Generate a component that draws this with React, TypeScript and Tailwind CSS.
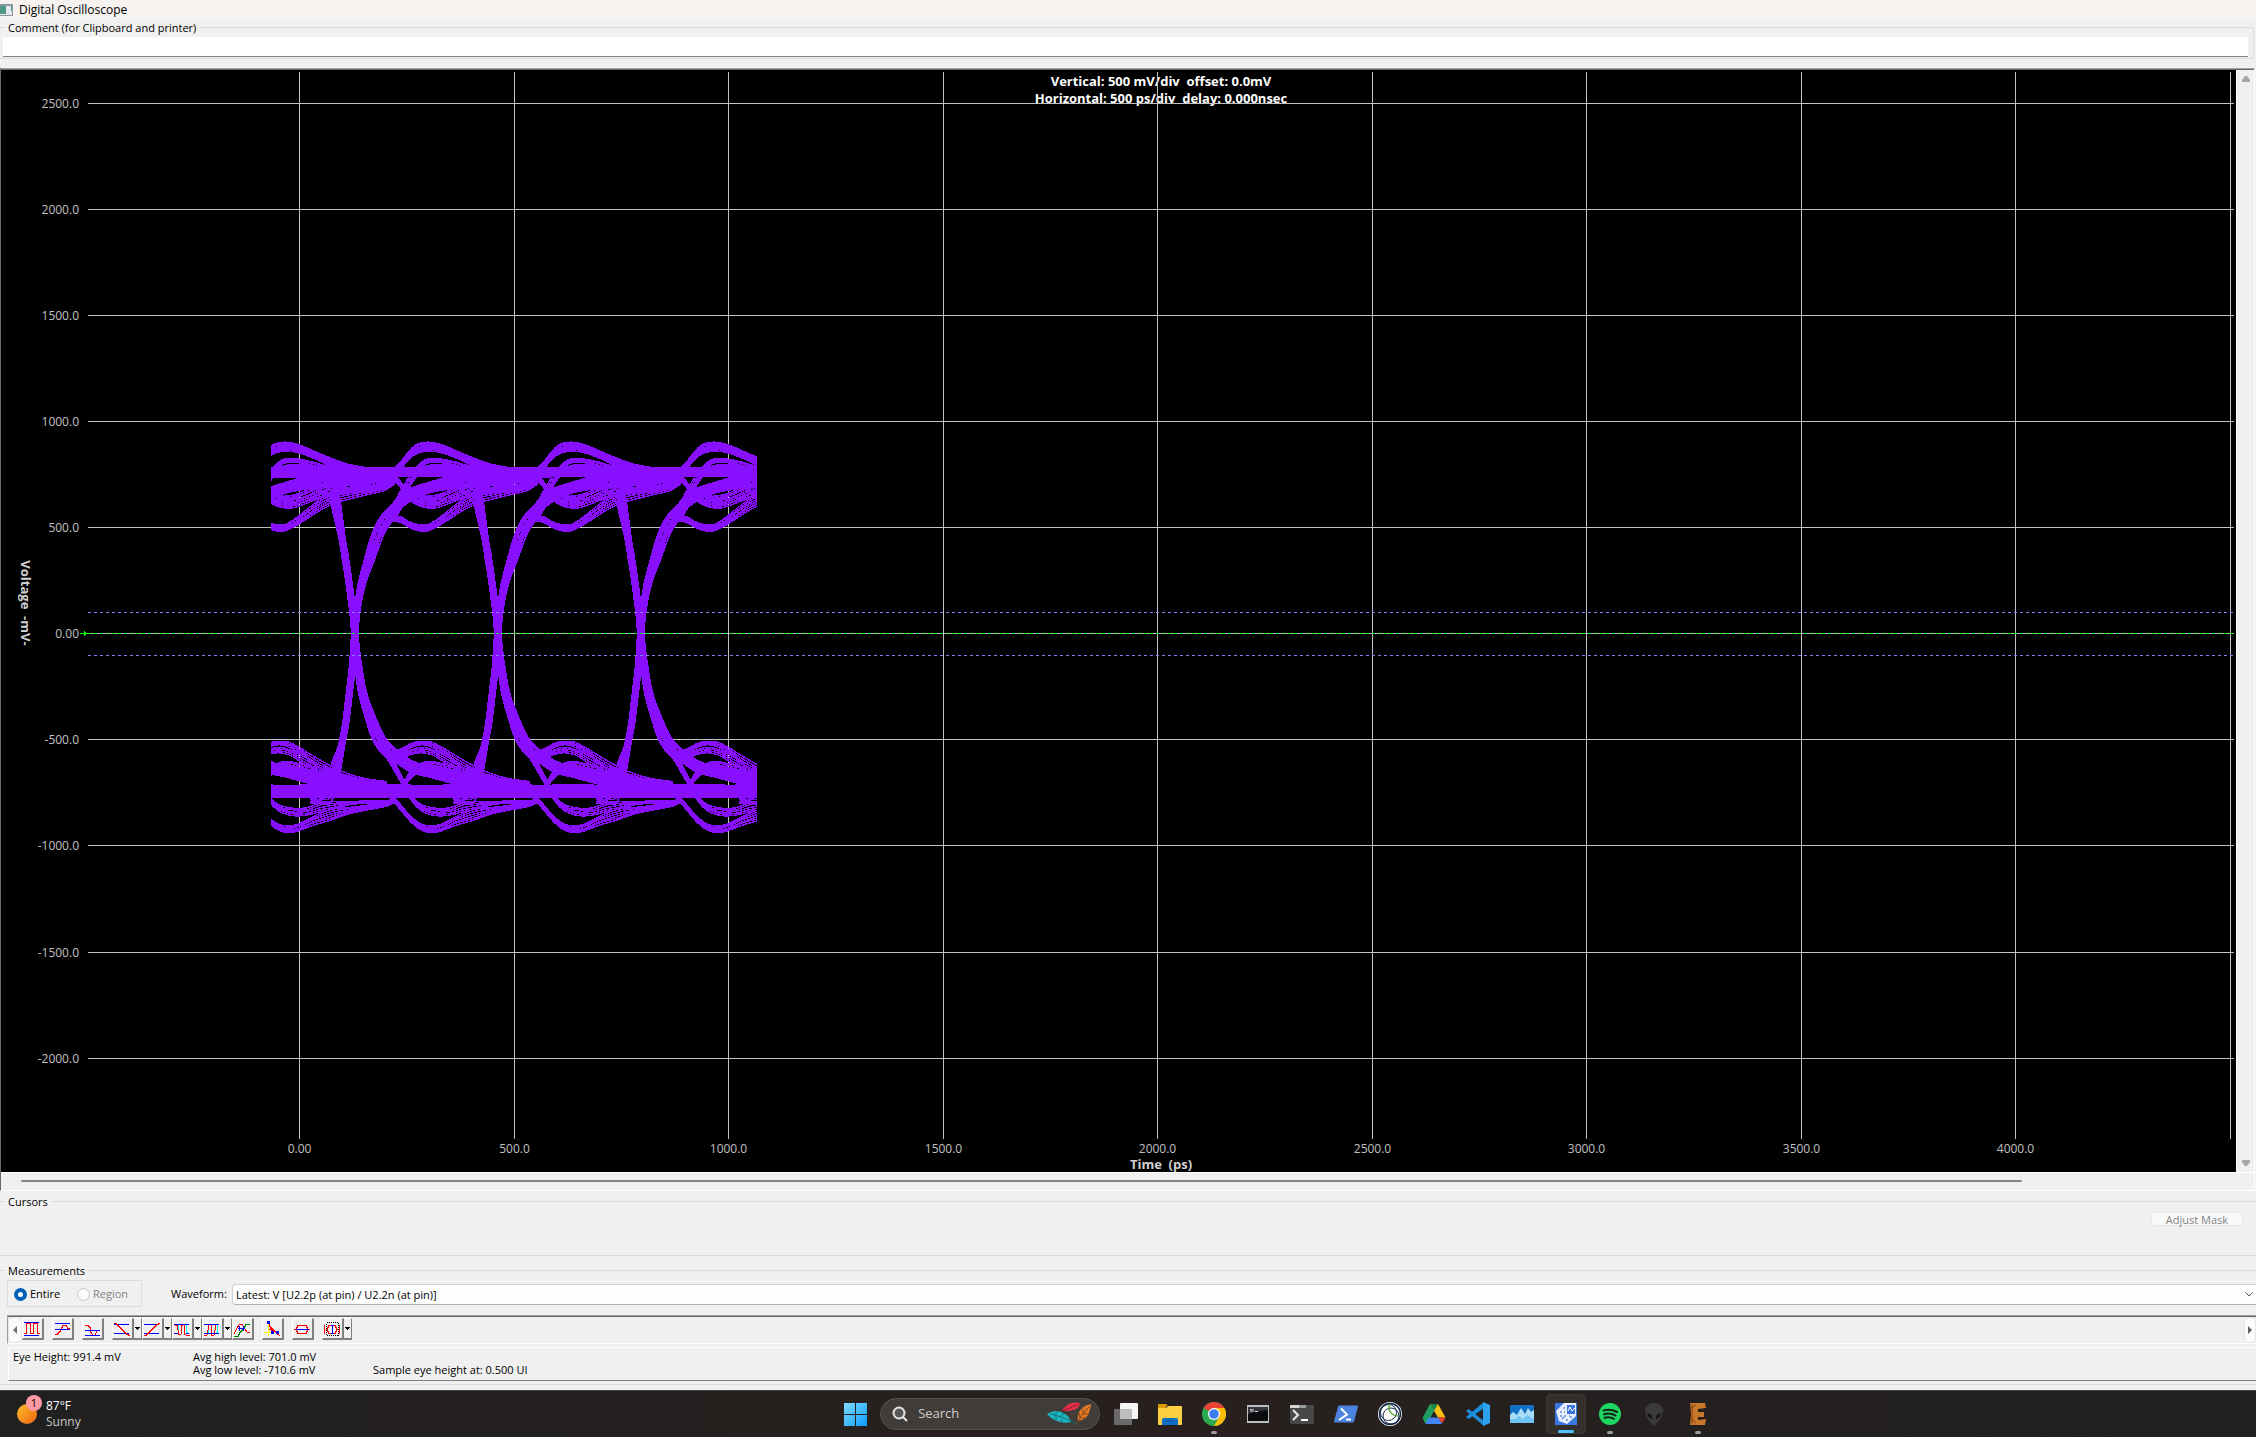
import { useState } from "react";
import type { ReactNode } from "react";

// x, y, spread in x, spread in y
type Pt = [number, number, number, number];
type Bundle = { count: number; pts: Pt[] };

const PLOT_W = 2235;
const PLOT_H = 1102;
const PERIOD = 429;

const timeTicks = [0, 500, 1000, 1500, 2000, 2500, 3000, 3500, 4000, 4500];
const voltTicks = [2500, 2000, 1500, 1000, 500, 0, -500, -1000, -1500, -2000];

const timeX = (ps: number) => Math.round(298 + ps * 0.42909) + 0.5;
const voltY = (mv: number) => Math.round(563.2 - mv * 0.2122) + 0.5;

// One unit interval of the eye, every trace family as a bundle of strands.
// Units are thirds of a plot pixel.
const bundles: Bundle[] = [
  // overshoot after a rising edge
  { count: 8, pts: [[180, 128, 0, 10], [195, 122, 0, 16], [213, 106, 0, 22], [235, 78, 0, 24], [262, 56, 0, 28], [300, 50, 0, 26], [340, 58, 0, 24], [380, 74, 0, 22], [435, 98, 0, 24], [480, 112, 0, 20], [540, 120, 0, 14], [620, 126, 0, 10]] },
  { count: 4, pts: [[208, 195, 12, 0], [224, 176, 12, 0], [240, 150, 14, 8], [262, 118, 6, 14], [290, 94, 0, 12], [330, 92, 0, 10], [380, 104, 0, 14], [430, 118, 0, 14], [500, 125, 0, 10], [600, 128, 0, 8]] },
  { count: 3, pts: [[222, 190, 8, 0], [240, 162, 8, 0], [262, 130, 6, 6], [290, 112, 0, 8], [330, 108, 0, 8], [380, 114, 0, 6], [440, 122, 0, 8]] },
  // falling edge, top to bottom
  { count: 15, pts: [[-60, 140, 0, -50], [-29, 155, 0, -70], [1, 168, 0, -100], [16, 210, 16, -70], [27, 270, 20, -20], [37, 330, 19, 0], [47, 390, 19, 0], [60, 480, 18, 0], [70, 560, 18, 0], [74, 610, 18, 0], [84, 700, 20, 0], [98, 790, 24, 0], [124, 870, 32, 0], [149, 930, 38, -6], [178, 966, 34, -20], [208, 984, 10, -34], [245, 1010, 0, -36], [300, 1026, 0, -32], [360, 1040, 0, -36], [430, 1058, 0, -40], [500, 1074, 0, -32], [620, 1084, 0, -24]] },
  // rising edge, bottom to top
  { count: 15, pts: [[-60, 1095, 0, 50], [-29, 1084, 0, 70], [1, 1066, 0, 110], [15, 1028, 16, 70], [27, 980, 20, 20], [36, 940, 18, 0], [47, 880, 18, 0], [58, 790, 18, 0], [68, 700, 18, 0], [74, 610, 18, 0], [83, 530, 18, 0], [96, 460, 22, 0], [118, 390, 30, 0], [140, 322, 32, 10], [164, 274, 26, 24], [192, 242, 14, 36], [218, 208, 0, 46], [250, 190, 0, 36], [300, 172, 0, 32], [360, 158, 0, 38], [430, 148, 0, 44], [500, 146, 0, 40], [560, 142, 0, 34], [620, 135, 0, 24]] },
  // ring down under the high level
  { count: 6, pts: [[176, 266, 0, 16], [196, 266, 0, 16], [215, 270, 0, 18], [235, 282, 0, 16], [260, 292, 0, 18], [290, 294, 0, 18], [320, 280, 0, 22], [360, 252, 0, 28], [400, 224, 0, 34], [440, 202, 0, 38], [480, 192, 0, 34], [540, 182, 0, 24], [590, 172, 0, 20], [625, 150, 0, 20]] },
  { count: 9, pts: [[180, 138, 0, 16], [198, 148, 0, 16], [215, 168, 0, 18], [235, 195, 0, 22], [262, 210, 0, 30], [290, 216, 0, 34], [320, 214, 0, 38], [360, 200, 0, 38], [400, 184, 0, 40], [440, 172, 0, 44], [500, 164, 0, 40], [560, 156, 0, 30], [605, 144, 0, 22]] },
  // overshoot after a falling edge
  { count: 6, pts: [[180, 1100, 0, 20], [195, 1112, 0, 16], [215, 1136, 0, 16], [245, 1170, 0, 16], [275, 1192, 0, 18], [305, 1198, 0, 20], [335, 1192, 0, 20], [380, 1172, 0, 26], [430, 1155, 0, 32], [480, 1143, 0, 20], [540, 1133, 0, 14], [600, 1121, 0, 14], [625, 1108, 0, 14]] },
  { count: 5, pts: [[236, 1092, 0, 14], [248, 1108, 0, 16], [262, 1124, 0, 16], [285, 1138, 0, 20], [320, 1146, 0, 22], [360, 1144, 0, 22], [400, 1132, 0, 26], [440, 1126, 0, 22], [500, 1118, 0, 8], [600, 1116, 0, 6]] },
  // ring up over the low level
  { count: 4, pts: [[176, 970, 0, 12], [190, 968, 0, 12], [215, 962, 0, 12], [245, 946, 0, 12], [275, 939, 0, 10], [305, 944, 0, 14], [340, 962, 0, 16], [380, 990, 0, 22], [430, 1018, 0, 22], [470, 1036, 0, 20], [530, 1052, 0, 14], [600, 1060, 0, 10]] },
  { count: 4, pts: [[190, 978, 0, 14], [215, 976, 0, 14], [245, 966, 0, 14], [275, 960, 0, 16], [310, 968, 0, 16], [350, 990, 0, 22], [390, 1012, 0, 22], [440, 1034, 0, 20], [500, 1050, 0, 14], [600, 1064, 0, 10]] },
  { count: 5, pts: [[168, 970, 16, 0], [186, 996, 16, 0], [204, 1030, 14, 0], [220, 1060, 10, 0], [232, 1076, 8, 0]] },
  { count: 5, pts: [[218, 1068, 10, 0], [232, 1050, 14, 0], [250, 1026, 10, 12], [275, 1008, 0, 18], [305, 1004, 0, 18], [340, 1012, 0, 20], [400, 1026, 0, 24], [440, 1040, 0, 24], [500, 1056, 0, 18], [600, 1068, 0, 12]] },
  { count: 7, pts: [[230, 1010, 0, 20], [265, 1022, 0, 22], [300, 1028, 0, 24], [360, 1042, 0, 24], [430, 1058, 0, 26], [500, 1072, 0, 22], [600, 1080, 0, 16]] },
];

// settled high and low levels run straight through
const levels = [114, 117, 120, 123, 126, 129, 131, 134, 137, 140, 1066, 1069, 1072, 1075, 1078, 1081, 1084, 1087, 1090, 1093, 1096, 1099, 1102];

const px = (x: number) => 329 + x / 3;
const py = (y: number) => 360 + y / 3;

// repeatable noise in -0.5..0.5
function noise(a: number, b: number) {
  const n = Math.sin(a * 127.1 + b * 311.7) * 43758.5453;
  return n - Math.floor(n) - 0.5;
}

function smoothPath(points: number[][]) {
  let d = `M${points[0][0].toFixed(1)} ${points[0][1].toFixed(1)}`;
  for (let i = 0; i < points.length - 1; i++) {
    const p0 = points[Math.max(i - 1, 0)];
    const p1 = points[i];
    const p2 = points[i + 1];
    const p3 = points[Math.min(i + 2, points.length - 1)];
    const c = [
      p1[0] + (p2[0] - p0[0]) / 6,
      p1[1] + (p2[1] - p0[1]) / 6,
      p2[0] - (p3[0] - p1[0]) / 6,
      p2[1] - (p3[1] - p1[1]) / 6,
      p2[0],
      p2[1],
    ];
    d += `C${c.map((n) => n.toFixed(1)).join(" ")}`;
  }
  return d;
}

function eyePaths() {
  const paths: string[] = [];
  for (let k = -2; k <= 3; k++) {
    bundles.forEach((b, bi) => {
      for (let s = 0; s < b.count; s++) {
        const base = s / (b.count - 1) - 0.5;
        const edge = s === 0 || s === b.count - 1;
        const pts = b.pts.map(([x, y, dx, dy], i) => {
          const f = edge ? base : base + noise(bi * 31 + s, i) * 0.1;
          return [px(x + dx * f + k * PERIOD), py(y + dy * f)];
        });
        paths.push(smoothPath(pts));
      }
    });
  }
  levels.forEach((y, li) => {
    const pts: number[][] = [];
    for (let i = 0; i <= 24; i++) {
      pts.push([px(-200 + i * 70), py(y + noise(li, i) * 2)]);
    }
    paths.push(smoothPath(pts));
  });
  return paths;
}

const traces = eyePaths();

const formatTick = (v: number) => (v === 0 ? "0.00" : v.toFixed(1));

function ScopePlot() {
  return (
    <svg viewBox={`0 0 ${PLOT_W} ${PLOT_H}`} className="block h-auto w-full bg-black" role="img" aria-label="Eye diagram">
      <defs>
        <clipPath id="eye">
          <rect x="270" y="350" width="486" height="450" />
        </clipPath>
      </defs>
      <g fill="#ffffff" className="text-[13px] font-bold" textAnchor="middle">
        <text x="1160" y="16" xmlSpace="preserve">Vertical: 500 mV/div  offset: 0.0mV</text>
        <text x="1160" y="33" xmlSpace="preserve">Horizontal: 500 ps/div  delay: 0.000nsec</text>
      </g>
      <g stroke="#c0c0c0" shapeRendering="crispEdges">
        {timeTicks.map((t) => (
          <line key={t} x1={timeX(t)} x2={timeX(t)} y1="2" y2="1069" />
        ))}
        {voltTicks.map((v) => (
          <line key={v} x1="87" x2="2233" y1={voltY(v)} y2={voltY(v)} />
        ))}
      </g>
      <g stroke="#8810ff" strokeWidth="1.5" fill="none" clipPath="url(#eye)" shapeRendering="crispEdges">
        {traces.map((d, i) => (
          <path key={i} d={d} />
        ))}
      </g>
      <g shapeRendering="crispEdges" strokeDasharray="3 3">
        <line x1="87" x2="2233" y1="542.5" y2="542.5" stroke="#8080ff" />
        <line x1="87" x2="2233" y1="585.5" y2="585.5" stroke="#8080ff" />
        <line x1="87" x2="2233" y1="563.5" y2="563.5" stroke="#00ff00" />
      </g>
      <path d="M79 563h4v-2h1v1h1v1h2v1h-2v1h-1v1h-1v-2h-4z" fill="#00ff00" shapeRendering="crispEdges" />
      <g fill="#c0c0c0" className="text-[12px]">
        {voltTicks.map((v) => (
          <text key={v} x="78" y={voltY(v) + 4} textAnchor="end">{formatTick(v)}</text>
        ))}
        {timeTicks.slice(0, -1).map((t) => (
          <text key={t} x={timeX(t)} y="1083" textAnchor="middle">{formatTick(t)}</text>
        ))}
      </g>
      <g fill="#d0d0d0" className="text-[13px] font-bold" textAnchor="middle">
        <text x="1160" y="1099" xmlSpace="preserve">Time  (ps)</text>
        <text transform="translate(20 533) rotate(90)" xmlSpace="preserve">Voltage  -mV-</text>
      </g>
    </svg>
  );
}

function ToolIcon({ children }: { children: ReactNode }) {
  return (
    <svg viewBox="0 0 18 18" className="block h-[18px] w-[18px]" fill="none" stroke="#ff0000" shapeRendering="crispEdges">
      {children}
    </svg>
  );
}

type Tool = { name: string; menu?: boolean; gap?: boolean; icon: ReactNode };

const tools: Tool[] = [
  { name: "Peak to peak", gap: true, icon: <><path d="M1 2.500h15M1 15.500h15" stroke="#0000ff" /><path d="M1 13.500h2.500v-10h4v10h3v-10h4v10h2" /></> },
  { name: "High level", gap: true, icon: <><path d="M2 14.500h2l3-3 3-6h3l2 3h2" /><path d="M2 3.500h15M2 9.500h15" stroke="#0000ff" /></> },
  { name: "Low level", gap: true, icon: <><path d="M2 5.500h3l2 2 1 5 2 3h2l2-5h3" /><path d="M2 10.500h15M2 15.500h15" stroke="#0000ff" /></> },
  { name: "Fall time", menu: true, icon: <><path d="M1 4.500h15M1 13.500h15" stroke="#0000ff" /><path d="M1 3.500h2l11 11 3 1" /></> },
  { name: "Rise time", menu: true, icon: <><path d="M1 4.500h15M1 13.500h15" stroke="#0000ff" /><path d="M1 15.500h2l11-11 3-1" /></> },
  { name: "Positive width", menu: true, icon: <><path d="M5.500 4v9M13.500 5v7l2 2" stroke="#00ffff" /><path d="M1 4.500l3 1 2 9h2l1-9 2-1 1 10 2 1h3" /><path d="M1 4.500h15M1 13.500h4M13 13.500h3" stroke="#0000ff" /></> },
  { name: "Negative width", menu: true, icon: <><path d="M5.500 5v8M14.500 5v7l-2 2" stroke="#00ffff" /><path d="M1 15.500h3l2-11h2l1 11h2l2-11h3" /><path d="M1 4.500h15M1 13.500h15" stroke="#0000ff" /></> },
  { name: "Delay", gap: true, icon: <><path d="M1 16.500h4l2-4 4-4 2-4h4" stroke="#008000" /><path d="M1 14l3-6 3-4h2l2 4 3 4h3" /><path d="M5 8.500h7M6.500 6v5M10.500 6v5" stroke="#0000ff" /></> },
  { name: "Track", gap: true, icon: <><path d="M5.500 4v12M1 12.500h10" stroke="#ffff00" /><path d="M6 4l3 9M6 5l8 8M7 8l10 8M6 10l4-2" /><path d="M4 1h3v3h-3zM8 11h3v3h-3zM13 11h3v3h-3z" fill="#0000ff" stroke="none" /></> },
  { name: "Eye width", gap: true, icon: <><path d="M1 9.500h2l2-4h8l2 4h2M3 9.500l2 4h8l2-4" /><path d="M3 9.500h13" stroke="#0000ff" /></> },
  { name: "Eye height", menu: true, icon: <><path d="M3.500 2.500h12v13h-12z" stroke="#000000" strokeDasharray="1 1" /><path d="M2 5l-1 4 1 5M4 9.500l2-4h6l2 4-2 4h-6zM16 5l1 4-1 5" /><path d="M9.500 6v7M8 5.500h3M8 13.500h3" stroke="#0000ff" /></> },
];

function ToolButton({ tool }: { tool: Tool }) {
  return (
    <div className={tool.gap ? "mr-2 flex" : "flex"}>
      <button
        aria-label={tool.name}
        className="h-[22px] w-[22px] border border-r-2 border-b-2 border-white border-r-[#808080] border-b-[#808080] bg-[#f0f0f0]"
      >
        <ToolIcon>{tool.icon}</ToolIcon>
      </button>
      {tool.menu && (
        <button
          aria-label={`${tool.name} options`}
          className="flex h-[22px] w-2 items-center justify-center border-t border-r border-b-2 border-white border-r-[#808080] border-b-[#808080] bg-[#f0f0f0]"
        >
          <svg viewBox="0 0 5 3" className="h-[3px] w-[5px]" shapeRendering="crispEdges">
            <path d="M0 0h5v1h-1v1h-1v1h-1v-1h-1v-1h-1z" />
          </svg>
        </button>
      )}
    </div>
  );
}

function Toolbar() {
  return (
    <div className="ml-[7px] flex h-[29px] border-t border-b border-l border-t-[#a0a0a0] border-b-white border-l-[#a0a0a0]">
      <div className="flex w-full border-t border-[#696969]">
        <button aria-label="Scroll left" className="flex w-[14px] items-center justify-center rounded-sm border border-[#e5e5e5] bg-[#fbfbfb]">
          <svg viewBox="0 0 4 8" className="h-2 w-1"><path d="M4 0v8l-4-4z" fill="#707070" /></svg>
        </button>
        <div className="flex flex-1 pt-px">
          {tools.map((tool) => <ToolButton key={tool.name} tool={tool} />)}
        </div>
        <button aria-label="Scroll right" className="flex w-3 items-center justify-center rounded-sm border border-[#e5e5e5] bg-[#fbfbfb]">
          <svg viewBox="0 0 4 8" className="h-2 w-1"><path d="M0 0v8l4-4z" fill="#606060" /></svg>
        </button>
      </div>
    </div>
  );
}

function Group({ title, className, children }: { title: string; className: string; children?: ReactNode }) {
  return (
    <fieldset className={`border-t border-b border-[#dcdcdc] ${className}`}>
      <legend className="ml-[5px] h-[14px] px-[3px] leading-4">{title}</legend>
      {children}
    </fieldset>
  );
}

function Measurements() {
  const [range, setRange] = useState("entire");
  return (
    <Group title="Measurements" className="mt-[7px] h-[122px]">
      <div className="flex h-[38px] items-start pt-[3px]">
        <div className="ml-[7px] flex h-[27px] w-[135px] items-center border border-[#dcdcdc] pt-px pl-[6px]">
          <label className="flex w-[63px] items-center gap-[3px]">
            <input
              type="radio"
              name="range"
              checked={range === "entire"}
              onChange={() => setRange("entire")}
              className="h-[13px] w-[13px] appearance-none rounded-full border border-[#8a8a8a] bg-white checked:border-4 checked:border-[#005fb8]"
            />
            Entire
          </label>
          <label className="flex items-center gap-[3px] text-[#838383]">
            <input type="radio" name="range" disabled className="h-[13px] w-[13px] appearance-none rounded-full border border-[#c5c5c5] bg-[#fbfbfb]" />
            Region
          </label>
        </div>
        <label htmlFor="waveform" className="mt-1 ml-[29px] w-[61px] leading-5">Waveform:</label>
        <div className="relative mt-1 flex-1">
          <select id="waveform" className="block h-[21px] w-full appearance-none rounded-l-sm border border-r-0 border-[#cfcfcf] border-b-[#b0b0b0] bg-[#fdfdfd] pt-[2px] pl-[3px]">
            <option>Latest: V [U2.2p (at pin) / U2.2n (at pin)]</option>
          </select>
          <svg viewBox="0 0 8 5" className="pointer-events-none absolute top-2 right-[3px] h-[5px] w-2" fill="none" stroke="#505050">
            <path d="M0.500 0.500l3.500 3.500 3.500-3.500" />
          </svg>
        </div>
      </div>
      <Toolbar />
      <div className="mt-[3px] ml-2 flex h-[34px] border-t border-b border-l border-t-[#fbfbfb] border-b-[#808080] border-l-white pt-[2px] leading-[13px]">
        <p className="w-[180px] pl-1">Eye Height: 991.4 mV</p>
        <p className="w-[180px] pl-1">Avg high level: 701.0 mV<br />Avg low level: -710.6 mV</p>
        <p className="pt-[13px] pl-1">Sample eye height at: 0.500 UI</p>
      </div>
    </Group>
  );
}

type TaskApp = { name: string; running?: boolean; active?: boolean; icon: ReactNode };

const apps: TaskApp[] = [
  { name: "Task view", icon: <><rect x="6" y="1" width="18" height="16" rx="1" fill="#f5f5f5" /><rect x="0" y="7" width="18" height="16" rx="1" fill="#6a6a6a" /><path d="M6 7h12v10h-12z" fill="#bdbdbd" /></> },
  { name: "File Explorer", icon: <><path d="M0 3q0-1 1-1h7l2 2h-2v4h-8z" fill="#d99b00" /><path d="M0 6h8l2-2h13q1 0 1 1v17q0 1-1 1h-22q-1 0-1-1z" fill="#ffcf43" /><path d="M4 23v-5q0-2 2-2h12q2 0 2 2v5z" fill="#0f6fc5" /><path d="M8 19h8" stroke="#0a4f92" strokeWidth="1" /></> },
  { name: "Chrome", running: true, icon: <><circle cx="12" cy="12" r="12" fill="#2da94f" /><path d="M12 12L1.600 6A12 12 0 0 1 22.400 6z" fill="#ea4335" /><path d="M12 6h10.400A12 12 0 0 1 12 24l5.200-9z" fill="#fbbc04" /><circle cx="12" cy="12" r="6" fill="#ffffff" /><circle cx="12" cy="12" r="4.800" fill="#3b7ded" /></> },
  { name: "Command Prompt", icon: <><rect x="1" y="3" width="22" height="18" fill="#b9bec2" /><rect x="2" y="5" width="20" height="14" fill="#0b0b0d" /><path d="M2 12q10-3 20-4v-3h-20z" fill="#33363a" /><path d="M4 7.500h2M4 9h2M7 7v3M9 9.500h3" stroke="#d0d0d0" strokeWidth="1" /></> },
  { name: "Terminal", icon: <><rect x="0" y="3" width="24" height="19" rx="1" fill="#484848" /><path d="M0 6v-2q0-1 1-1h8v3z" fill="#d5d5d5" /><path d="M9 3h7v3h-7z" fill="#9b9b9b" /><path d="M3 8l5 5-5 5" fill="none" stroke="#e8e8e8" strokeWidth="2" /><path d="M11 18h7" stroke="#ffffff" strokeWidth="2" /></> },
  { name: "PowerShell", icon: <><path d="M5 3.500h18q1 0 1 1l-4 15q0 1-1 1h-18q-1 0-1-1l4-15q0-1 1-1z" fill="#4c82e0" /><path d="M7 6.500l6 6-8 5.500" fill="none" stroke="#ffffff" strokeWidth="2" /><path d="M12 17.500h5" stroke="#ffffff" strokeWidth="2" /></> },
  { name: "Cadence", icon: <><circle cx="12" cy="12" r="12" fill="#ffffff" /><circle cx="12" cy="12" r="10.500" fill="none" stroke="#14284b" strokeWidth="1.500" /><circle cx="10.500" cy="10.500" r="8" fill="none" stroke="#14284b" /><circle cx="13" cy="14" r="8" fill="none" stroke="#14284b" /><path d="M11 2v5q1 6 9 7" fill="none" stroke="#56a839" strokeWidth="1.500" /></> },
  { name: "Google Drive", icon: <><path d="M8 2h8l-9 16-3.500 4-3-6z" fill="#1ea15f" /><path d="M8 2h8l7.500 13.500h-7.500z" fill="#fbc016" /><path d="M8 2h8l-4 7z" fill="#178243" /><path d="M7 15.500h9.500l3.500 6q-1 .500-2 .500h-12q-1.500 0-2.500-.500z" fill="#4285f4" /><path d="M16 15.500h7.500l-3.500 6z" fill="#ea4335" /></> },
  { name: "VS Code", icon: <><path d="M0 9l2.500-2 15.500 12v5z" fill="#1f8ad2" /><path d="M18 0v6l-15.500 11-2.500-2z" fill="#1a8fdd" /><path d="M17 0l7 3v18l-7 3z" fill="#2ba3ef" /></> },
  { name: "Signal viewer", icon: <><rect x="0" y="3" width="24" height="18" rx="1" fill="#1170c4" /><path d="M0 13l3-3 4 3 4-7 4 6 3-6 3 4 3-2v12q0 1-1 1h-22q-1 0-1-1z" fill="#a9dcf7" /><path d="M0 17l5 0 4-3 4 3 4-4 7 4v4h-24z" fill="#6fc3f2" /></> },
  { name: "Oscilloscope", active: true, icon: <><rect x="1" y="1" width="22" height="22" fill="#3a78e0" /><path d="M2 9l8-8h12v13l-9 8-8-3z" fill="#e8eefb" /><path d="M13 3h8v9h-8z" fill="#3a78e0" /><path d="M14 9l2-4 2 4 3-3" fill="none" stroke="#ffffff" strokeWidth="1" /><path d="M6 10h2M9 6h2M6 14h2M10 14h2M8 17l2-2M13 19v-2M17 16v-2M10 10h1M15 14h1" stroke="#5b8fe6" strokeWidth="1.500" /></> },
  { name: "Spotify", running: true, icon: <><circle cx="12" cy="12" r="11" fill="#1ed760" /><path d="M5.500 8.500q7-2 13.500 1.500M6 12.200q6-1.700 11.500 1.300M6.500 15.700q5-1.200 9.500 1.100" fill="none" stroke="#15231a" strokeWidth="2" strokeLinecap="round" /></> },
  { name: "Alienware", icon: <><path d="M12 1q8 0 9 8-1 8-9 15-8-7-9-15 1-8 9-8z" fill="#3b3b3b" /><path d="M5 11q5 0 5.500 6-4 0-5.500-6zM19 11q-5 0-5.500 6 4 0 5.500-6z" fill="#151515" /></> },
  { name: "Eagle", running: true, icon: <><path d="M4 1h15l1 5-8 1v3h6v5h-6v3l8-1-1 6h-15l1-11z" fill="#c9772b" /><path d="M6 2v20M4 7l6-4M5 16l5 5" stroke="#84430f" strokeWidth="1" /></> },
];

function Taskbar() {
  return (
    <footer className="mt-[5px] grid h-[47px] grid-cols-[17fr_auto_11fr] items-center border-t border-[#444444] bg-gradient-to-r from-[#202020] via-[#28201e] to-[#202020]">
      <div className="flex items-center pl-[17px] text-[12px] leading-4 text-white">
        <div className="relative mr-[9px] h-5 w-5 rounded-full bg-gradient-to-br from-[#f9bd2c] to-[#ef6210]">
          <span className="absolute -top-[9px] left-[9px] h-4 w-4 rounded-full bg-[#ff99a4] text-center text-[11px] text-black">1</span>
        </div>
        <div>
          <p>87°F</p>
          <p className="text-[#c8c8c8]">Sunny</p>
        </div>
      </div>
      <nav className="flex items-center pl-4">
        <button aria-label="Start" className="mr-[13px]">
          <svg viewBox="0 0 23 23" className="block h-[23px] w-[23px]">
            <defs>
              <linearGradient id="win" x1="0" y1="0" x2="1" y2="1">
                <stop offset="0" stopColor="#7fdcff" />
                <stop offset="1" stopColor="#0a9bff" />
              </linearGradient>
            </defs>
            <path d="M0 0h11v11h-11zM12 0h11v11h-11zM0 12h11v11h-11zM12 12h11v11h-11z" fill="url(#win)" />
          </svg>
        </button>
        <label className="mr-1 flex h-8 w-[220px] items-center rounded-full border border-[#555150] bg-[#403c3a] pl-[11px]">
          <svg viewBox="0 0 16 16" className="mr-[10px] h-4 w-4" fill="none" stroke="#e5e5e5" strokeWidth="2">
            <circle cx="7" cy="7" r="5.500" fill="#575757" />
            <path d="M11 11l4 4" />
          </svg>
          <input type="search" aria-label="Search" placeholder="Search" className="w-[129px] bg-transparent text-[13px] placeholder:text-[#cfcdcc]" />
          <svg viewBox="0 0 44 24" className="h-6 w-11">
            <path d="M0 12q8-5 14-2 7 2 10 10-8 2-14-1-6-2-10-7z" fill="#1fb5bf" />
            <path d="M3 12q12 2 27 10M8 13l3-4M13 15l4-4M9 14l0 4M15 17v3" stroke="#0c6f7c" fill="none" />
            <path d="M15 8q5-6 10-7 5-1 8 0-1 6-7 7-6 2-11 0z" fill="#e23346" />
            <path d="M14 9q8-2 17-7" stroke="#93172a" fill="none" />
            <path d="M44 2q-9 2-12 8-2 5-1 9 7-1 10-6 3-6 3-11z" fill="#e07c2b" />
            <path d="M42 5q-9 8-13 18M36 11v-4M33 15l-1-4M36 12h5M33 16h5" stroke="#81420f" fill="none" />
          </svg>
        </label>
        {apps.map((app) => (
          <button
            key={app.name}
            aria-label={app.name}
            className={`relative mx-[2px] flex h-10 w-10 items-center justify-center rounded ${app.active ? "border border-[#3d3836] bg-[#332f2d]" : ""}`}
          >
            <svg viewBox="0 0 24 24" className="h-6 w-6">{app.icon}</svg>
            {app.running && <span className="absolute bottom-0 h-[3px] w-[6px] rounded-full bg-[#9a9a9a]" />}
            {app.active && <span className="absolute bottom-0 h-[3px] w-4 rounded-full bg-[#4cc2ff]" />}
          </button>
        ))}
      </nav>
      <div />
    </footer>
  );
}

export default function App() {
  return (
    <div className="min-h-screen overflow-hidden bg-[#f0f0f0] font-['Open_Sans','Noto_Sans',sans-serif] text-[11px] text-black">
      <header className="flex h-5 items-center bg-[#f6f2ef]">
        <svg viewBox="0 0 13 12" className="mr-[6px] h-3 w-[13px]">
          <path d="M0 0h13v12h-13z" fill="#8f96a3" />
          <path d="M0 2h12v9h-12z" fill="#e4e9ee" />
          <path d="M0 2h6v8h-6z" fill="#4f9a86" />
          <path d="M11 2h1v5h-1z" fill="#4f9a86" />
        </svg>
        <h1 className="text-[12px]">Digital Oscilloscope</h1>
      </header>

      <Group title="Comment (for Clipboard and printer)" className="mr-[2px] h-[39px] rounded-r-sm border-r">
        <div className="mt-[3px] mr-[5px] ml-[3px]">
          <input type="text" aria-label="Comment (for Clipboard and printer)" className="block h-5 w-full border-b border-[#808080] bg-white px-1" />
        </div>
      </Group>

      <main className="mt-[9px] mr-px border-t border-r border-b border-l border-t-[#a0a0a0] border-r-white border-b-white border-l-[#696969]">
        <div className="flex border-t border-[#696969]">
          <div className="min-w-0 flex-1">
            <ScopePlot />
          </div>
          <div className="flex w-[18px] flex-col items-center justify-between border-l border-white pt-[6px] pb-[6px]">
            <button aria-label="Scroll up">
              <svg viewBox="0 0 8 6" className="block h-[6px] w-2"><path d="M3 0h2l3 4v2h-8v-2z" fill="#a6a6a6" /></svg>
            </button>
            <button aria-label="Scroll down">
              <svg viewBox="0 0 8 6" className="block h-[6px] w-2"><path d="M3 6h2l3-4v-2h-8v2z" fill="#a6a6a6" /></svg>
            </button>
          </div>
        </div>
        <div className="h-[18px] border-t border-white pt-[7px] pr-[232px] pl-5">
          <div className="h-[2px] rounded-full bg-[#868686]" />
        </div>
      </main>

      <Group title="Cursors" className="mt-[3px] h-[62px]">
        <div className="flex justify-end pt-1 pr-[13px]">
          <button disabled className="h-[14px] w-[92px] rounded border border-[#e8e8e8] bg-[#f9f9f9] leading-[14px] text-[#838383]">
            Adjust Mask
          </button>
        </div>
      </Group>

      <Measurements />
      <Taskbar />
    </div>
  );
}
